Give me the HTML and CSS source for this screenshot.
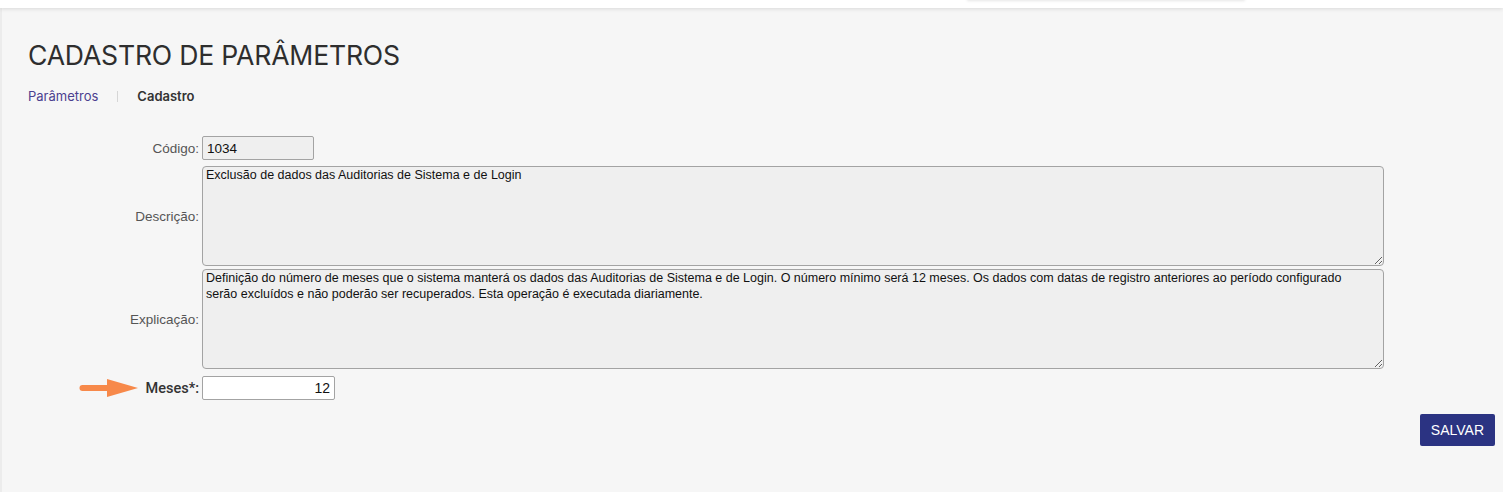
FILE: index.html
```html
<!DOCTYPE html>
<html lang="pt-BR">
<head>
<meta charset="utf-8">
<title>Cadastro de Parâmetros</title>
<link rel="stylesheet" href="styles.css">
</head>
<body>
<header class="topbar">
  <div class="topbar-menu"></div>
</header>
<main class="panel">
  <h1 class="title">CADASTRO DE PARÂMETROS</h1>
  <nav class="breadcrumb">
    <a class="crumb-link" href="#">Parâmetros</a>
    <span class="crumb-sep"></span>
    <span class="crumb-current">Cadastro</span>
  </nav>
  <form class="form">
    <div class="row row-code">
      <label class="label">Código:</label>
      <input class="field field-code" type="text" value="1034" readonly>
    </div>
    <div class="row row-desc">
      <label class="label">Descrição:</label>
      <textarea class="area" readonly>Exclusão de dados das Auditorias de Sistema e de Login</textarea>
    </div>
    <div class="row row-expl">
      <label class="label">Explicação:</label>
      <textarea class="area" readonly>Definição do número de meses que o sistema manterá os dados das Auditorias de Sistema e de Login. O número mínimo será 12 meses. Os dados com datas de registro anteriores ao período configurado serão excluídos e não poderão ser recuperados. Esta operação é executada diariamente.</textarea>
    </div>
    <div class="row row-meses">
      <label class="label label-strong">
        <svg class="arrow" width="60" height="20" viewBox="0 0 60 20">
          <line x1="3.5" y1="10" x2="32" y2="10" stroke="#f7894a" stroke-width="6" stroke-linecap="round"/>
          <polygon points="28,1 59,10 28,19" fill="#f7894a"/>
        </svg>
        Meses*:</label>
      <input class="field field-meses" type="text" value="12">
    </div>
    <div class="actions">
      <button class="btn" type="button">SALVAR</button>
    </div>
  </form>
</main>
</body>
</html>
```
FILE: styles.css
```css
html, body {
  margin: 0;
  padding: 0;
  background: #ffffff;
}
body {
  height: 492px;
  overflow: hidden;
  font-family: "Liberation Sans", Arial, sans-serif;
}
.topbar {
  height: 8px;
  background: #fff;
  position: relative;
  z-index: 2;
  box-shadow: 0 1px 4px rgba(0,0,0,0.12);
}
.topbar-menu {
  position: absolute;
  left: 967px;
  top: -6px;
  width: 278px;
  height: 6px;
  background: #fff;
  box-shadow: 0 1px 3px rgba(0,0,0,0.10);
}
.panel {
  background: #f6f6f6;
  border-left: 2px solid #ececec;
  height: 484px;
  box-sizing: border-box;
  padding: 31px 8px 0 26px;
}
.title {
  margin: 0;
  font-family: Inter, "Noto Sans", sans-serif;
  font-weight: 400;
  font-size: 26.6px;
  line-height: 32px;
  color: #2e2e2e;
  letter-spacing: -0.2px;
}
.breadcrumb {
  margin-top: 17px;
  display: flex;
  align-items: center;
  font-family: Inter, "Noto Sans", sans-serif;
  font-size: 13px;
  line-height: 16px;
}
.crumb-link {
  color: #4b3f8f;
  text-decoration: none;
}
.crumb-sep {
  width: 1px;
  height: 11px;
  background: #d6d6d6;
  margin: 0 19px;
}
.crumb-current {
  color: #333;
  font-weight: 600;
}
.form {
  margin-top: 32px;
}
.row {
  display: flex;
  align-items: center;
}
.label {
  width: 171px;
  padding-right: 3px;
  text-align: right;
  font-size: 13.5px;
  color: #555;
  display: flex;
  justify-content: flex-end;
  align-items: center;
}
.label-strong {
  font-size: 14.5px;
  color: #333;
  font-family: Roboto, "Liberation Sans", sans-serif;
  font-weight: 500;
}
.arrow {
  margin-right: 7px;
}
.field {
  box-sizing: border-box;
  height: 24px;
  border: 1px solid #a3a3a3;
  border-radius: 2px;
  font-family: "Liberation Sans", Arial, sans-serif;
  font-size: 13.5px;
  color: #111;
  padding: 0 4px;
  outline: none;
}
.field-code {
  width: 112px;
  background: #efefef;
}
.field-meses {
  width: 133px;
  background: #fff;
  text-align: right;
  font-size: 14px;
}
.area {
  box-sizing: border-box;
  width: 1182px;
  height: 100px;
  border: 1px solid #a3a3a3;
  border-radius: 4px;
  background: #efefef;
  font-family: "Liberation Sans", Arial, sans-serif;
  font-size: 12.5px;
  line-height: 16px;
  color: #111;
  padding: 0 34px 0 3px;
  margin: 0;
  outline: none;
}
.row-desc { margin-top: 6px; }
.row-expl { margin-top: 3px; }
.row-meses { margin-top: 7px; }
.actions {
  display: flex;
  justify-content: flex-end;
  margin-top: 14px;
}
.btn {
  height: 32px;
  padding: 0 11px;
  background: #2b3382;
  color: #fff;
  border: none;
  border-radius: 2px;
  font-family: "Liberation Sans", Arial, sans-serif;
  font-size: 14px;
}
```
